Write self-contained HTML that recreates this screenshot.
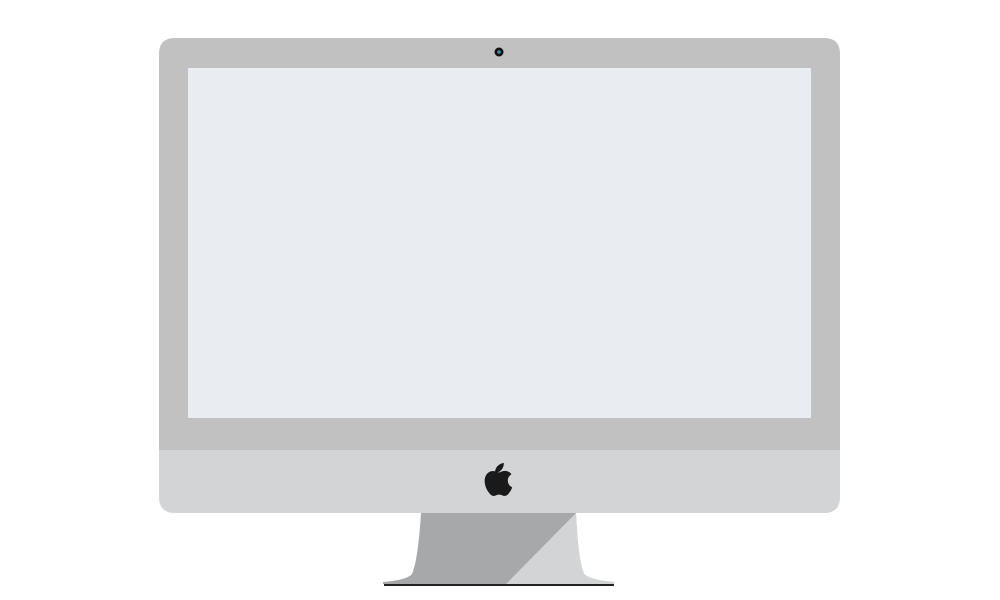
<!DOCTYPE html>
<html><head><style>
html,body{margin:0;padding:0;background:#fff;width:1000px;height:600px;overflow:hidden}
</style></head><body>
<svg width="1000" height="600" viewBox="0 0 1000 600" xmlns="http://www.w3.org/2000/svg">
<path d="M421 513 L576 513 Q578 560 584 574 Q590 580 614 582 L614 584 L383 584 L383 582 Q407 580 412 574 Q418 560 421 513 Z" fill="#a7a8a9"/>
<path d="M576 513 Q578 560 584 574 Q590 580 614 582 L614 584 L506 584 Z" fill="#d3d4d6"/>
<rect x="384" y="584" width="230" height="2" fill="#222"/>
<path d="M175 38 H824 Q840 38 840 54 V450 H159 V54 Q159 38 175 38 Z" fill="#c1c1c1"/>
<path d="M159 450 H840 V497 Q840 513 824 513 H175 Q159 513 159 497 Z" fill="#d3d4d6"/>
<rect x="188" y="68" width="623" height="350" fill="#e9ecf1"/>
<circle cx="499" cy="52" r="4.5" fill="#111"/>
<circle cx="499" cy="52" r="1.8" fill="#3a8fb0"/>
<g transform="translate(477,460) scale(0.115,0.112)" fill="#1a1a1a">
<path d="M213 87c13-16 22-38 20-60-19 1-42 13-56 29-12 14-23 37-20 58 21 2 43-11 56-27z"/>
<path d="M268 183c-1-37 30-55 32-56-18-26-45-29-54-30-23-2-45 14-57 14-12 0-30-13-49-13-25 0-48 15-61 37-26 45-7 112 19 149 12 18 27 38 46 37 19-1 26-12 48-12s29 12 49 12c20 0 33-18 45-36 14-21 20-41 20-42-1 0-38-15-38-60z"/>
</g>
</svg>
</body></html>
